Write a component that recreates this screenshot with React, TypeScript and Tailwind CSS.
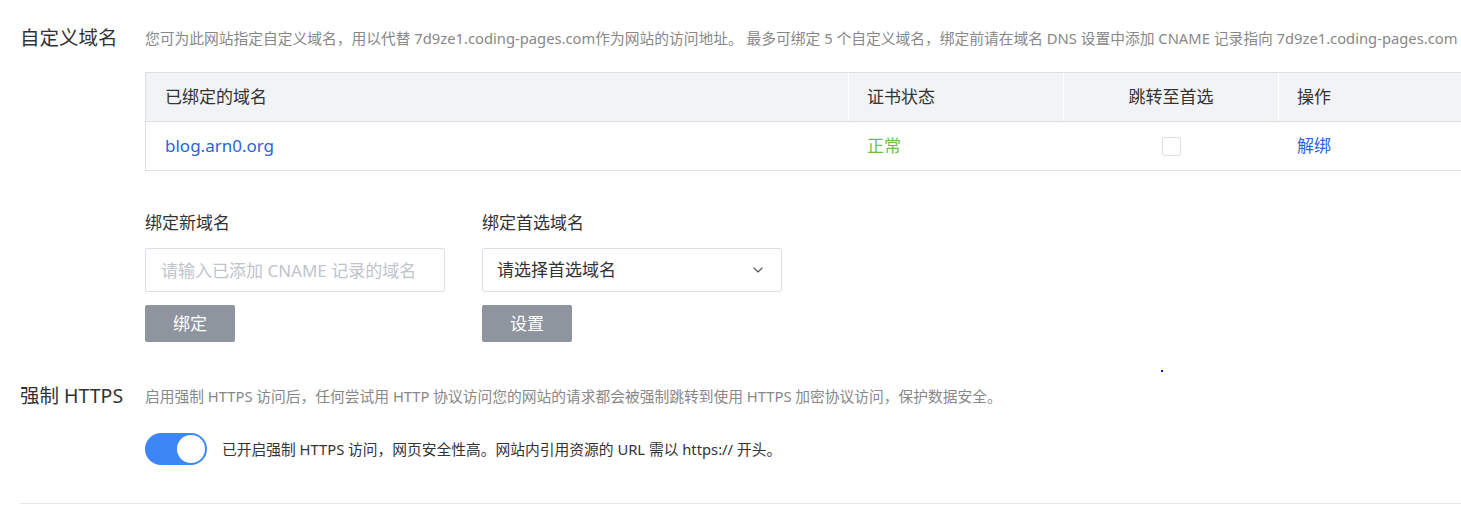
import React, { useState } from 'react';
import { ChevronDown } from 'lucide-react';

const font = { fontFamily: '"Noto Sans", "Noto Sans CJK SC", sans-serif' };

export default function App() {
  const [https, setHttps] = useState(true);
  const [domain, setDomain] = useState('');

  return (
    <div className="relative w-[1461px] h-[516px] overflow-hidden bg-white text-[#333]" style={font}>
      <div className="pl-[20px] pt-[18px]">
        {/* 自定义域名 */}
        <div className="flex items-center h-[40px]">
          <h2 className="w-[125px] shrink-0 text-[19.5px] text-[#333]">自定义域名</h2>
          <p className="text-[14.75px] text-[#888] whitespace-nowrap">
            您可为此网站指定自定义域名，用以代替 7d9ze1.coding-pages.com作为网站的访问地址。 最多可绑定 5 个自定义域名，绑定前请在域名 DNS 设置中添加 CNAME 记录指向 7d9ze1.coding-pages.com
          </p>
        </div>

        <div className="ml-[125px] mt-[14px]">
          <div className="w-[1400px] border border-[#dcdfe6]">
            <div className="flex h-[49px] bg-[#f2f3f5] text-[17px] text-[#333] border-b border-[#dcdfe6]">
              <div className="w-[703px] flex items-center pl-[19px] border-r border-white">已绑定的域名</div>
              <div className="w-[215px] flex items-center pl-[18px] border-r border-white">证书状态</div>
              <div className="w-[215px] flex items-center justify-center border-r border-white">跳转至首选</div>
              <div className="flex-1 flex items-center pl-[18px]">操作</div>
            </div>
            <div className="flex h-[48px] text-[17px]">
              <div className="w-[703px] flex items-center pl-[19px] text-[#2d63d8]">blog.arn0.org</div>
              <div className="w-[215px] flex items-center pl-[18px] text-[#72c043]">正常</div>
              <div className="w-[215px] flex items-center justify-center">
                <span className="block w-[19px] h-[19px] border border-[#dcdfe6] rounded-[2px] bg-white" />
              </div>
              <div className="flex-1 flex items-center pl-[18px] text-[#2d63d8]">解绑</div>
            </div>
          </div>

          <div className="flex gap-[37px] mt-[40px]">
            <div className="flex flex-col">
              <label className="h-[24px] leading-[24px] text-[17px] text-[#333]">绑定新域名</label>
              <input
                value={domain}
                onChange={(e) => setDomain(e.target.value)}
                placeholder="请输入已添加 CNAME 记录的域名"
                className="mt-[13px] w-[300px] h-[44px] border border-[#dcdfe6] rounded-[2px] px-[15px] text-[17px] text-[#333] placeholder:text-[#c0c4cc] outline-none"
              />
              <button className="mt-[13px] w-[90px] h-[37px] rounded-[2px] bg-[#8f959e] text-white text-[17px]">绑定</button>
            </div>
            <div className="flex flex-col">
              <label className="h-[24px] leading-[24px] text-[17px] text-[#333]">绑定首选域名</label>
              <div className="mt-[13px] w-[300px] h-[44px] border border-[#dcdfe6] rounded-[2px] pl-[14px] pr-[15px] flex items-center justify-between text-[17px] text-[#333]">
                <span>请选择首选域名</span>
                <ChevronDown size={16} strokeWidth={1.75} className="text-[#555]" />
              </div>
              <button className="mt-[13px] w-[90px] h-[37px] rounded-[2px] bg-[#8f959e] text-white text-[17px]">设置</button>
            </div>
          </div>
        </div>

        {/* 强制 HTTPS */}
        <div className="flex items-center h-[40px] mt-[34px]">
          <h2 className="w-[125px] shrink-0 text-[19.5px] text-[#333]">强制 HTTPS</h2>
          <p className="text-[14.75px] text-[#888] whitespace-nowrap">
            启用强制 HTTPS 访问后，任何尝试用 HTTP 协议访问您的网站的请求都会被强制跳转到使用 HTTPS 加密协议访问，保护数据安全。
          </p>
        </div>

        <div className="ml-[125px] mt-[17px] flex items-center h-[32px]">
          <button
            onClick={() => setHttps(!https)}
            className={`relative w-[62px] h-[32px] rounded-full ${https ? 'bg-[#3d86f5]' : 'bg-[#dcdfe6]'}`}
          >
            <span className={`absolute top-[2px] w-[28px] h-[28px] rounded-full bg-white ${https ? 'right-[2px]' : 'left-[2px]'}`} />
          </button>
          <span className="ml-[15px] text-[14.75px] text-[#333]">
            已开启强制 HTTPS 访问，网页安全性高。网站内引用资源的 URL 需以 https:// 开头。
          </span>
        </div>

        <div className="mt-[38px] h-px bg-[#e4e7ed]" />
      </div>

      <span className="absolute left-[1161px] top-[370px] w-[2px] h-[2px] bg-[#1010c8]" />
    </div>
  );
}
